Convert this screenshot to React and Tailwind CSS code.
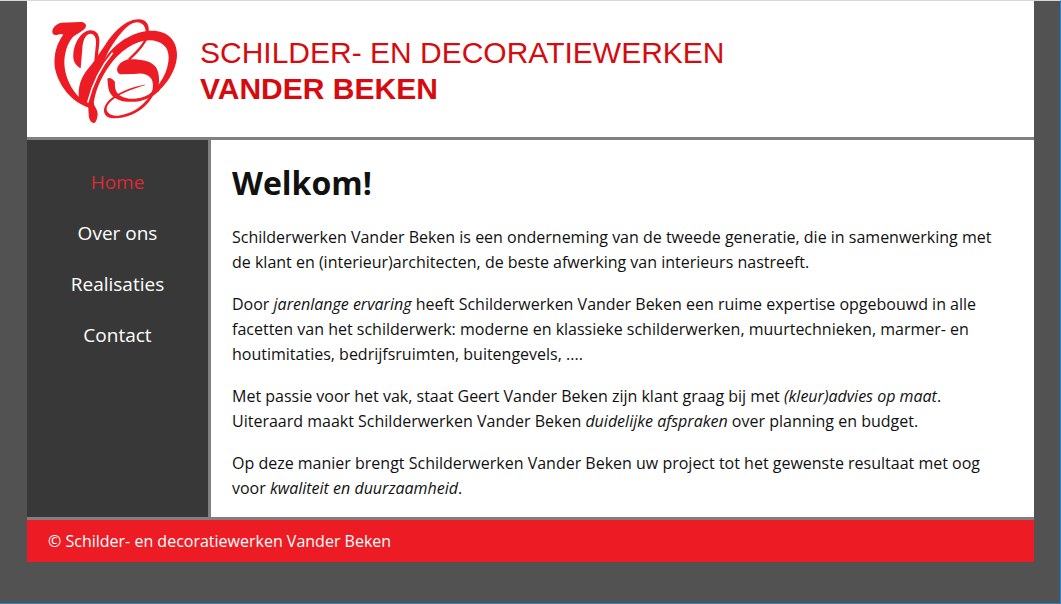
const RED = "#ed1c24";

function Logo() {
  return (
    <svg viewBox="0 0 450 375" className="h-[125px] w-[150px] shrink-0" fill={RED} aria-hidden="true">
      {/* left arm of the V with its serif */}
      <path d="M37 68C40 56 50 47 64 44L122 42C134 42 141 50 137 58C130 70 112 76 98 88C82 106 73 136 73 166C74 206 94 246 120 270L150 284L148 299C98 284 54 234 44 176C41 138 50 106 70 80C62 74 54 82 45 81C39 80 36 75 37 68Z" />
      {/* small inner loop */}
      <path d="M122 181C106 172 98 158 100 138C103 104 124 69 150 67C172 66 180 84 178 106L173 150L163 158L168 106C169 88 162 76 150 77C136 79 128 98 127 122Z" />
      {/* right arm of the V and the upper loop */}
      <path d="M117 272C113 238 122 208 146 180C162 162 176 138 196 110C222 72 256 34 296 34C320 34 329 52 326 73L317 76C318 58 310 43 290 43C262 45 236 82 206 128C190 164 164 222 150 288Z" />
      {/* arch of the B */}
      <path d="M148 292C152 240 176 178 204 138C236 98 286 68 336 68C382 68 411 96 411 140C410 188 378 236 330 270L322 264C362 234 386 188 386 148C386 114 362 98 328 97C284 98 240 130 212 168C182 208 164 252 160 294Z" />
      <path d="M143 284C156 232 184 174 218 134" fill="none" stroke="#fff" strokeWidth="5" />
      {/* foot of the V */}
      <path d="M144 286L162 284C160 294 174 302 173 320C171 338 166 345 160 345C152 343 146 332 146 318Z" />
      {/* waist of the B */}
      <path d="M325 72C320 102 292 132 267 154" fill="none" stroke={RED} strokeWidth="7" />
      <path d="M264 154C302 153 334 158 348 178C359 196 360 224 352 250L330 262C340 248 342 226 334 212C322 196 304 194 282 198L242 199C230 196 228 182 236 172C242 162 254 157 264 154Z" />
      {/* bowl of the B */}
      <path d="M202 212C208 206 220 213 225 222C223 242 229 256 242 264C266 278 308 274 332 256C346 244 356 236 362 232L358 248C342 262 318 278 286 281C252 284 228 276 214 260C203 246 205 232 202 212Z" />
      {/* lower loop */}
      <path d="M315 230C282 235 244 249 218 268C190 288 184 314 202 326C214 333 240 332 262 325C298 313 324 292 342 258L334 257C314 288 290 308 256 318C236 325 216 326 206 316C194 304 200 288 222 272C246 255 280 242 315 232Z" />
    </svg>
  );
}

const links = ["Home", "Over ons", "Realisaties", "Contact"];

export default function App() {
  return (
    <div className="min-h-screen border-t border-r border-b border-t-[#d9d9d9] border-r-[#1e87dc] border-b-[#2f7fc4] bg-[#525252] pr-[26px] pl-[27px] font-['Open_Sans','Noto_Sans',sans-serif] text-base text-[#111111]">
      <header className="flex items-start border-b-[3px] border-[#808080] bg-white pt-[7px] pb-1 pl-[13px]">
        <Logo />
        <div className="pt-[27px] pl-[10px] font-['Liberation_Sans',Arial,sans-serif] text-[30px] leading-[36px] text-[#d60b0f]">
          <p>SCHILDER- EN DECORATIEWERKEN</p>
          <p className="font-bold">VANDER BEKEN</p>
        </div>
      </header>
      <div className="flex">
        <nav className="w-[184px] shrink-0 border-r-[3px] border-[#808080] bg-[#383838] pt-[17px]">
          <ul className="text-center text-[19px] leading-[51px]">
            {links.map((label, i) => (
              <li key={label}>
                <a href="#" className={i === 0 ? "text-[#dc2a33]" : "text-white"}>{label}</a>
              </li>
            ))}
          </ul>
        </nav>
        <main className="flex-1 bg-white px-[21px] pt-[21px] pb-[16px] leading-[25px]">
          <h1 className="mb-[20px] text-[32px] leading-[44px] font-bold">Welkom!</h1>
          <div className="space-y-[17px]">
            <p>Schilderwerken Vander Beken is een onderneming van de tweede generatie, die in samenwerking met<br />de klant en (interieur)architecten, de beste afwerking van interieurs nastreeft.</p>
            <p>Door <em>jarenlange ervaring</em> heeft Schilderwerken Vander Beken een ruime expertise opgebouwd in alle<br />facetten van het schilderwerk: moderne en klassieke schilderwerken, muurtechnieken, marmer- en<br />houtimitaties, bedrijfsruimten, buitengevels, ....</p>
            <p>Met passie voor het vak, staat Geert Vander Beken zijn klant graag bij met <em>(kleur)advies op maat</em>.<br />Uiteraard maakt Schilderwerken Vander Beken <em>duidelijke afspraken</em> over planning en budget.</p>
            <p>Op deze manier brengt Schilderwerken Vander Beken uw project tot het gewenste resultaat met oog<br />voor <em>kwaliteit en duurzaamheid</em>.</p>
          </div>
        </main>
      </div>
      <footer className="border-t-[3px] border-[#808080] bg-[#ed1c24] px-[21px] py-2 leading-[26px] text-white">
        © Schilder- en decoratiewerken Vander Beken
      </footer>
    </div>
  );
}
